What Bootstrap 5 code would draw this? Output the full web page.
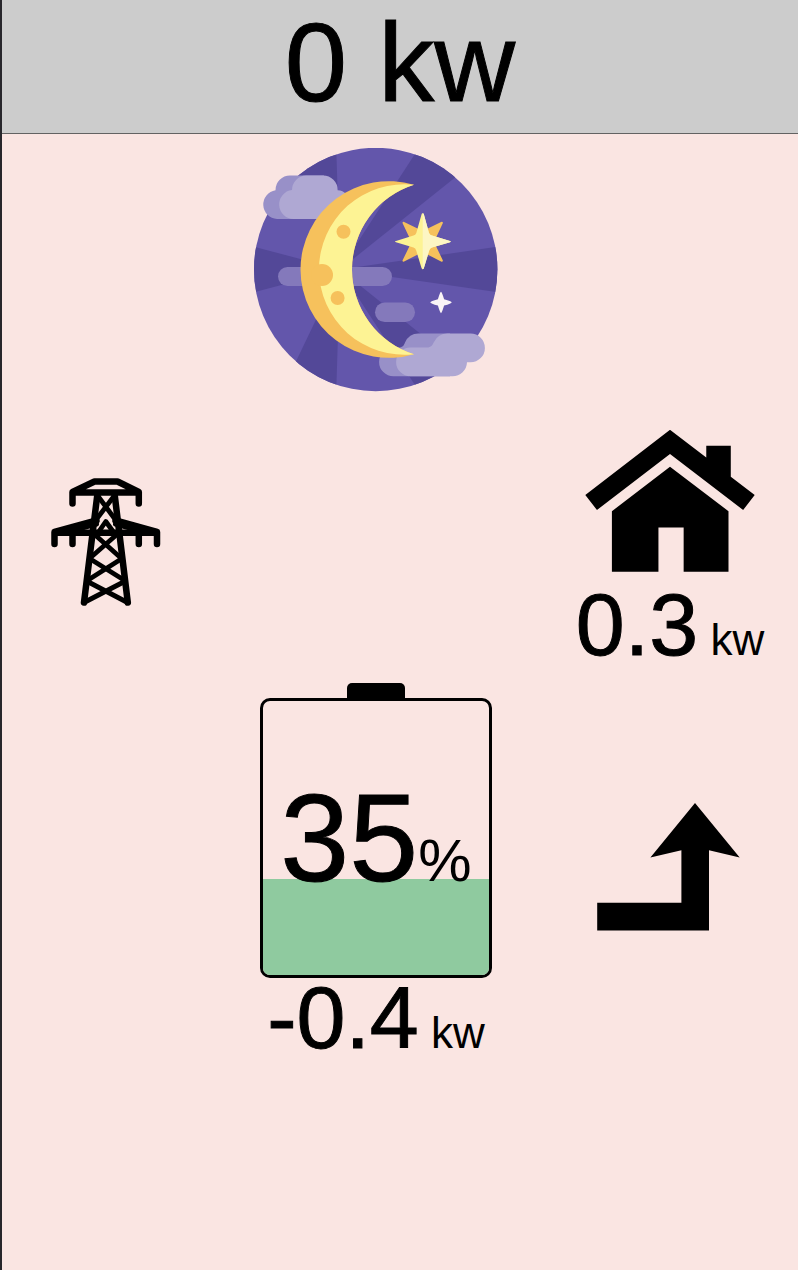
<!DOCTYPE html>
<html lang="en">
<head>
<meta charset="utf-8">
<meta name="viewport" content="width=device-width, initial-scale=1">
<title>Energy flow</title>
<link href="https://cdn.jsdelivr.net/npm/bootstrap@5.3.0/dist/css/bootstrap.min.css" rel="stylesheet">
<style>
  body {
    font-family: "Liberation Sans", Arial, sans-serif;
    background: #fae5e2;
    color: #000;
    border-left: 2px solid #27262b;
    -webkit-text-stroke: 1px #000;
  }
  .total-bar {
    background: #ccc;
    border-bottom: 1px solid #626262;
    font-size: 112px;
    line-height: 125px;
    padding-bottom: 8px;
  }
  .flow-grid {
    display: grid;
    grid-template-columns: minmax(0, 52fr) minmax(0, 83fr) minmax(0, 64fr);
    justify-items: center;
    align-items: start;
    padding-top: 14px;
  }
  .flow-grid svg { display: block; max-width: 100%; }
  .sky-cell { grid-column: 2; margin-bottom: 38px; }
  .grid-cell { grid-column: 1; padding-top: 48px; }
  .home-cell { grid-column: 3; margin-bottom: 18px; }
  .battery-cell { grid-column: 2; }
  .flow-cell { grid-column: 3; padding-top: 120px; }
  .reading { font-size: 88px; line-height: 80px; white-space: nowrap; }
  .home-cell .reading { margin-top: 13px; }
  .unit { font-size: 44px; line-height: 1; -webkit-text-stroke: 0; }
  .battery-cap { width: 58px; height: 15px; background: #000; border-radius: 5px 5px 0 0; }
  .battery-shell { width: 232px; height: 280px; border: 3px solid #000; border-radius: 10px; }
  .battery-level { background: #8fca9f; }
  .battery-text { font-size: 124px; line-height: 1; }
  .battery-text .percent { font-size: 60px; -webkit-text-stroke: 0; }
</style>
</head>
<body class="min-vh-100">
<header class="total-bar text-center">0 kw</header>

<main class="flow-grid">
  <div class="sky-cell">
    <svg width="244" height="244" viewBox="254 148 244 244" role="img" aria-label="Night">
      <defs><clipPath id="disc"><circle cx="375.7" cy="269.5" r="121.700"/></clipPath></defs>
      <circle cx="375.7" cy="269.5" r="121.7" fill="#6356ab"/>
      <g clip-path="url(#disc)" fill="#534898">
        <path d="M340 269.5 282 140 336 140Z"/>
        <path d="M340 269.5 424 140 502 140Z"/>
        <path d="M340 269.5 510 245V294Z"/>
        <path d="M340 269.5 502 399 424 399Z"/>
        <path d="M340 269.5 336 399 278 399Z"/>
        <path d="M340 269.5 240 243V296Z"/>
      </g>
      <g fill="#8479bb">
        <rect x="278" y="267" width="114" height="19" rx="9.500"/>
        <rect x="375" y="302.500" width="40" height="19.500" rx="9.750"/>
      </g>
      <path fill="#9890c8" d="M277 219a14.500 14.500 0 0 1-1.500-28.800A14.600 14.600 0 0 1 290 175.500H324V219Z"/>
      <path fill="#afa8d3" d="M294 219a14.500 14.500 0 0 1-2-28.900A14.600 14.600 0 0 1 306 175.500H323A14.600 14.600 0 0 1 337.700 190.200Q343 190.500 346 194V200L330 219Z"/>
      <path fill="#9890c8" d="M393.500 376.300a14.400 14.400 0 0 1 0-28.800H399C403 347.500 404 345 405 342.500Q409 333.500 418.500 333.500H450V376.300Z"/>
      <path fill="#afa8d3" d="M410.500 376.300a14.400 14.400 0 0 1 0-28.800H427C431 347.500 432.500 345 434 342Q438 333.500 447.500 333.500H470.500a14.400 14.400 0 0 1 0 28.800H467a14.500 14.500 0 0 1-14.500 14Z"/>
      <path fill="#f6c15c" d="M414 184.800A88.350 88.350 0 1 0 414 354.200A88.850 88.850 0 0 1 414 184.800Z"/>
      <path fill="#fdf394" d="M414 184.800A85.260 85.260 0 1 0 414 354.200A88.850 88.850 0 0 1 414 184.800Z"/>
      <g fill="#f6c15c">
        <circle cx="343.500" cy="231.700" r="7"/>
        <circle cx="322" cy="275" r="11"/>
        <circle cx="337.600" cy="298" r="7"/>
      </g>
      <path fill="#f6c15c" d="M403.600 221.700 422.700 231 441.600 221.700Q443 221.800 442.900 223L434 242 442.900 260.500Q442.800 262 441.500 261.800L422.700 252 403.600 261.800Q402.300 261.800 402.500 260.500L411.500 242 402.500 223Q402.500 221.700 403.600 221.700Z"/>
      <path fill="#fdf394" d="M422.700 213.300Q423.600 213.300 423.900 214.500L429 233Q430 235 432 235.600L450 241Q451.500 241.600 450 242.200L432 247.500Q430 248 429.200 250.500L423.900 268Q422.700 270.500 421.500 268L416.200 250.500Q415.500 248 413.500 247.500L396 242.200Q393.800 241.600 396 241L413.500 235.600Q415.500 235 416.300 233L421.500 214.500Q421.800 213.300 422.700 213.300Z"/>
      <path fill="#fdf6c4" d="M422.700 213.300Q423.600 213.300 423.900 214.500L429 233Q430 235 432 235.600L450 241Q451.500 241.600 450 242.200L432 247.500Q430 248 429.200 250.500L423.900 268Q423.500 269.200 422.700 269.300Z"/>
      <path fill="#faf4f6" d="M441 291.700Q441.900 292 444.100 299.200 451.500 301.300 451.700 302.400 451.500 303.400 444.100 305.600 441.900 313 441 313.200 440.100 313 437.900 305.600 430.600 303.400 430.300 302.400 430.600 301.300 437.900 299.200 440.100 292 441 291.700Z"/>
    </svg>
  </div>

  <div class="grid-cell">
    <svg width="110" height="128" viewBox="51.500 477.500 110 128" role="img" aria-label="Power grid" fill="none" stroke="#000" stroke-linecap="round" stroke-linejoin="round">
      <g stroke-width="6.500">
        <path d="M73 503V491.500L95 481H118L139.300 491.500V503M73 492H139.300"/>
        <path d="M55 543.500V531.500L97 520M157.500 543.500V531.500L116 520M55 532.300H157.500M73 534V543.500M139.300 534V543.500"/>
        <path d="M98 493 84.500 602M115 493 128.300 602"/>
      </g>
      <path stroke-width="4.800" d="M98 495 116.500 520 M115 495 96 520M98 533 106.300 521 115 533M94 533 122 558M118.500 533 90 558M90 558 126 580.500M122.500 558 87 580.500M87 580.500 128 602M126 580.500 84.500 602"/>
      <path stroke-width="5" d="M73 530 97 523.500M139.500 530 116 523.500"/>
    </svg>
  </div>

  <div class="home-cell text-center">
    <svg class="mx-auto" width="170" height="142" viewBox="584.300 429.500 170 142.500" role="img" aria-label="Home">
      <path d="M669.300 429.300 705.700 457V445.300H730.300V476.500L754.300 494.700 742.700 509.700 669.300 453.700 596 509.700 584.300 494.700ZM669.300 466.300 728 511V571.700H683V527.300H657.700V571.700H611V511Z"/>
    </svg>
    <div class="reading">0.3<span class="unit"> kw</span></div>
  </div>

  <div class="battery-cell d-flex flex-column align-items-center">
    <div class="battery-cap"></div>
    <div class="battery-shell position-relative overflow-hidden d-flex align-items-center justify-content-center">
      <div class="battery-level position-absolute bottom-0 start-0 w-100" style="height: 35%"></div>
      <div class="battery-text position-relative">35<span class="percent">%</span></div>
    </div>
    <div class="reading">-0.4<span class="unit"> kw</span></div>
  </div>

  <div class="flow-cell me-1">
    <svg width="143" height="128" viewBox="596.300 802.500 143 128" role="img" aria-label="Battery to home">
      <path d="M596.500 902.300H680.700V849.700L649.700 857 694.300 802.500 739 857 708.300 849.700V930H596.500Z"/>
    </svg>
  </div>
</main>
<script src="https://cdn.jsdelivr.net/npm/bootstrap@5.3.0/dist/js/bootstrap.bundle.min.js"></script>
</body>
</html>
